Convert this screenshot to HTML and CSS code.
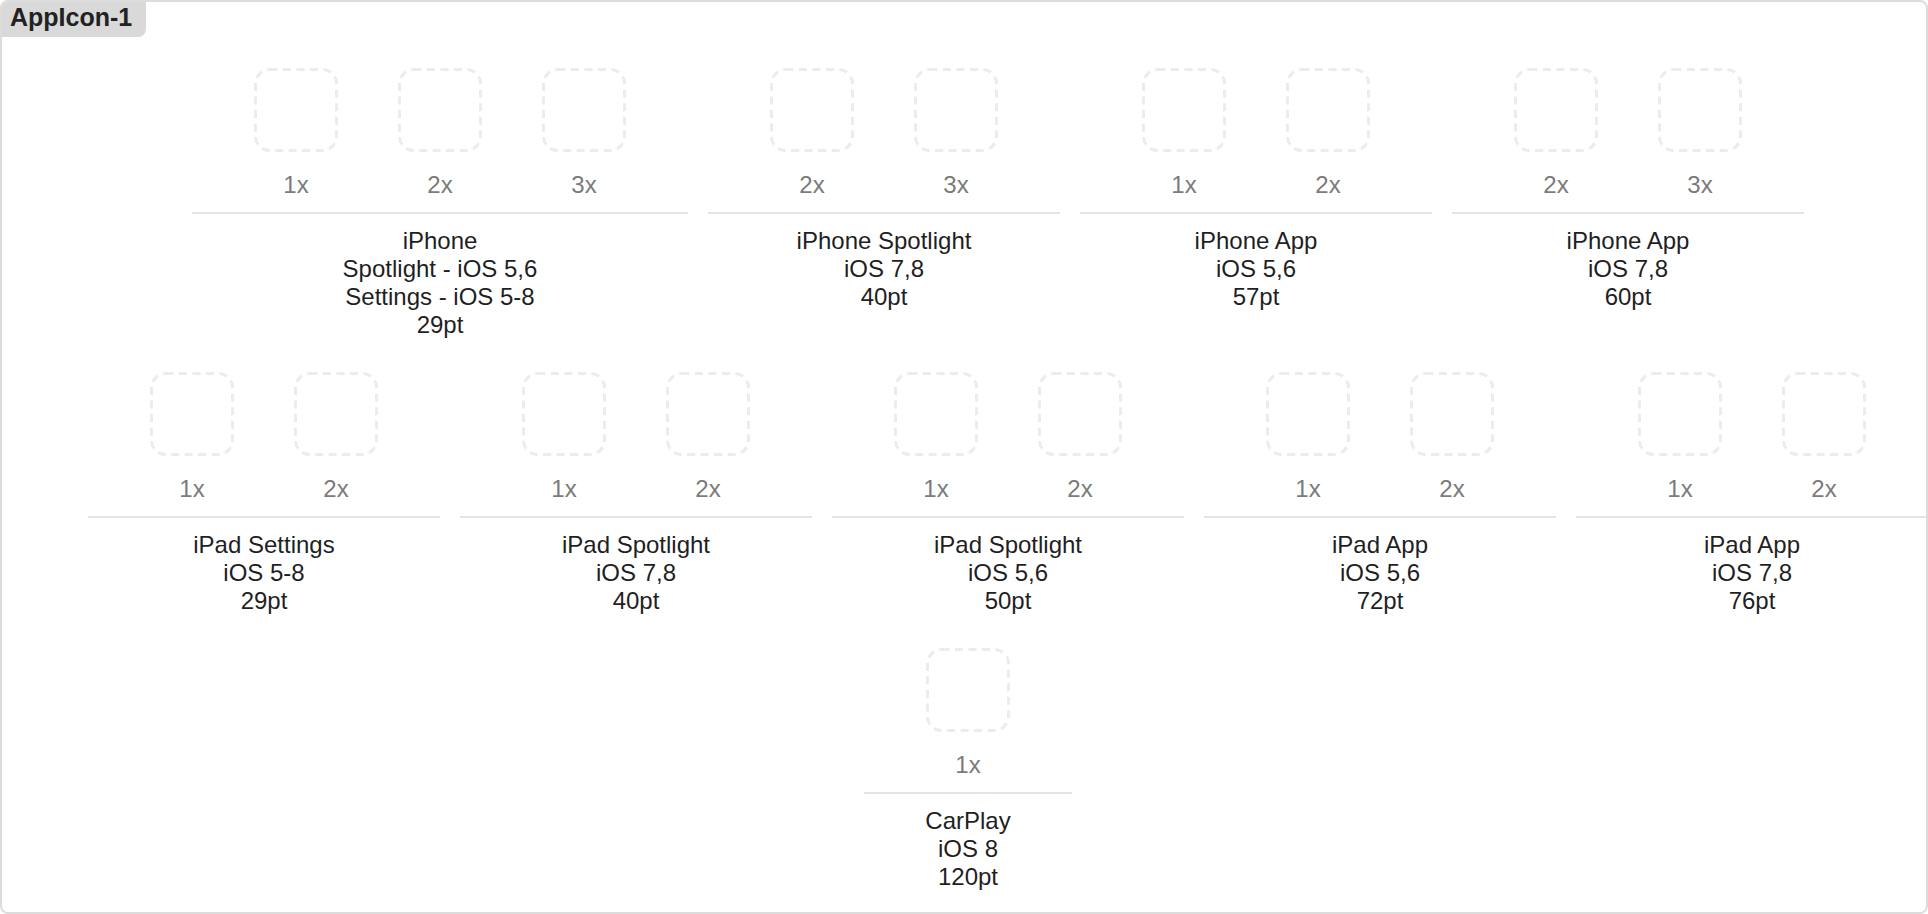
FILE: index.html
```html
<!DOCTYPE html>
<html lang="en">
<head>
<meta charset="utf-8">
<title>AppIcon-1</title>
<link rel="stylesheet" href="styles.css">
</head>
<body>
<div class="panel">
  <div class="tab">AppIcon-1</div>

  <div class="row row-1">
    <div class="group">
      <div class="slots">
        <div class="slot"><svg class="well" viewBox="0 0 84 84"><rect x="1.5" y="1.5" width="81" height="81" rx="14"/></svg><span class="scale">1x</span></div>
        <div class="slot"><svg class="well" viewBox="0 0 84 84"><rect x="1.5" y="1.5" width="81" height="81" rx="14"/></svg><span class="scale">2x</span></div>
        <div class="slot"><svg class="well" viewBox="0 0 84 84"><rect x="1.5" y="1.5" width="81" height="81" rx="14"/></svg><span class="scale">3x</span></div>
      </div>
      <div class="desc">iPhone<br>Spotlight - iOS 5,6<br>Settings - iOS 5-8<br>29pt</div>
    </div>
    <div class="group">
      <div class="slots">
        <div class="slot"><svg class="well" viewBox="0 0 84 84"><rect x="1.5" y="1.5" width="81" height="81" rx="14"/></svg><span class="scale">2x</span></div>
        <div class="slot"><svg class="well" viewBox="0 0 84 84"><rect x="1.5" y="1.5" width="81" height="81" rx="14"/></svg><span class="scale">3x</span></div>
      </div>
      <div class="desc">iPhone Spotlight<br>iOS 7,8<br>40pt</div>
    </div>
    <div class="group">
      <div class="slots">
        <div class="slot"><svg class="well" viewBox="0 0 84 84"><rect x="1.5" y="1.5" width="81" height="81" rx="14"/></svg><span class="scale">1x</span></div>
        <div class="slot"><svg class="well" viewBox="0 0 84 84"><rect x="1.5" y="1.5" width="81" height="81" rx="14"/></svg><span class="scale">2x</span></div>
      </div>
      <div class="desc">iPhone App<br>iOS 5,6<br>57pt</div>
    </div>
    <div class="group">
      <div class="slots">
        <div class="slot"><svg class="well" viewBox="0 0 84 84"><rect x="1.5" y="1.5" width="81" height="81" rx="14"/></svg><span class="scale">2x</span></div>
        <div class="slot"><svg class="well" viewBox="0 0 84 84"><rect x="1.5" y="1.5" width="81" height="81" rx="14"/></svg><span class="scale">3x</span></div>
      </div>
      <div class="desc">iPhone App<br>iOS 7,8<br>60pt</div>
    </div>
  </div>

  <div class="row row-2">
    <div class="group">
      <div class="slots">
        <div class="slot"><svg class="well" viewBox="0 0 84 84"><rect x="1.5" y="1.5" width="81" height="81" rx="14"/></svg><span class="scale">1x</span></div>
        <div class="slot"><svg class="well" viewBox="0 0 84 84"><rect x="1.5" y="1.5" width="81" height="81" rx="14"/></svg><span class="scale">2x</span></div>
      </div>
      <div class="desc">iPad Settings<br>iOS 5-8<br>29pt</div>
    </div>
    <div class="group">
      <div class="slots">
        <div class="slot"><svg class="well" viewBox="0 0 84 84"><rect x="1.5" y="1.5" width="81" height="81" rx="14"/></svg><span class="scale">1x</span></div>
        <div class="slot"><svg class="well" viewBox="0 0 84 84"><rect x="1.5" y="1.5" width="81" height="81" rx="14"/></svg><span class="scale">2x</span></div>
      </div>
      <div class="desc">iPad Spotlight<br>iOS 7,8<br>40pt</div>
    </div>
    <div class="group">
      <div class="slots">
        <div class="slot"><svg class="well" viewBox="0 0 84 84"><rect x="1.5" y="1.5" width="81" height="81" rx="14"/></svg><span class="scale">1x</span></div>
        <div class="slot"><svg class="well" viewBox="0 0 84 84"><rect x="1.5" y="1.5" width="81" height="81" rx="14"/></svg><span class="scale">2x</span></div>
      </div>
      <div class="desc">iPad Spotlight<br>iOS 5,6<br>50pt</div>
    </div>
    <div class="group">
      <div class="slots">
        <div class="slot"><svg class="well" viewBox="0 0 84 84"><rect x="1.5" y="1.5" width="81" height="81" rx="14"/></svg><span class="scale">1x</span></div>
        <div class="slot"><svg class="well" viewBox="0 0 84 84"><rect x="1.5" y="1.5" width="81" height="81" rx="14"/></svg><span class="scale">2x</span></div>
      </div>
      <div class="desc">iPad App<br>iOS 5,6<br>72pt</div>
    </div>
    <div class="group">
      <div class="slots">
        <div class="slot"><svg class="well" viewBox="0 0 84 84"><rect x="1.5" y="1.5" width="81" height="81" rx="14"/></svg><span class="scale">1x</span></div>
        <div class="slot"><svg class="well" viewBox="0 0 84 84"><rect x="1.5" y="1.5" width="81" height="81" rx="14"/></svg><span class="scale">2x</span></div>
      </div>
      <div class="desc">iPad App<br>iOS 7,8<br>76pt</div>
    </div>
  </div>

  <div class="row row-3">
    <div class="group">
      <div class="slots">
        <div class="slot"><svg class="well" viewBox="0 0 84 84"><rect x="1.5" y="1.5" width="81" height="81" rx="14"/></svg><span class="scale">1x</span></div>
      </div>
      <div class="desc">CarPlay<br>iOS 8<br>120pt</div>
    </div>
  </div>
</div>
</body>
</html>
```

FILE: styles.css
```css
html, body {
  margin: 0;
  padding: 0;
  background: #ffffff;
}

body {
  font-family: "Liberation Sans", Arial, Helvetica, sans-serif;
  color: #1f1f1f;
}

.panel {
  box-sizing: border-box;
  width: 100%;
  height: 100vh;
  border: 2px solid #dcdcdc;
  border-radius: 8px;
  overflow: hidden;
  background: #ffffff;
}

.tab {
  display: inline-block;
  vertical-align: top;
  height: 35px;
  line-height: 31px;
  padding: 0 14px 0 8px;
  background: #d9d9d9;
  border-bottom-right-radius: 8px;
  font-size: 25px;
  font-weight: bold;
  color: #222222;
}

.row {
  display: flex;
  flex-wrap: nowrap;
  align-items: flex-start;
  gap: 20px;
  margin-top: 33px;
}

.row-1 {
  margin-top: 31px;
  padding-left: 190px;
}

.row-2 {
  padding-left: 86px;
}

.row-3 {
  padding-left: 862px;
}

.group {
  flex: 0 0 auto;
  display: flex;
  flex-direction: column;
}

.slots {
  display: flex;
  padding: 0 32px 13px;
  border-bottom: 2px solid #e4e4e4;
}

.slot {
  width: 144px;
  display: flex;
  flex-direction: column;
  align-items: center;
}

.well {
  display: block;
  width: 84px;
  height: 84px;
}

.well rect {
  fill: none;
  stroke: #ececec;
  stroke-width: 3;
  stroke-dasharray: 8 5.5;
}

.scale {
  margin-top: 19px;
  font-size: 24px;
  line-height: 28px;
  color: #7b7b7b;
}

.desc {
  margin-top: 13px;
  font-size: 24px;
  line-height: 28px;
  text-align: center;
  color: #1f1f1f;
}
```
